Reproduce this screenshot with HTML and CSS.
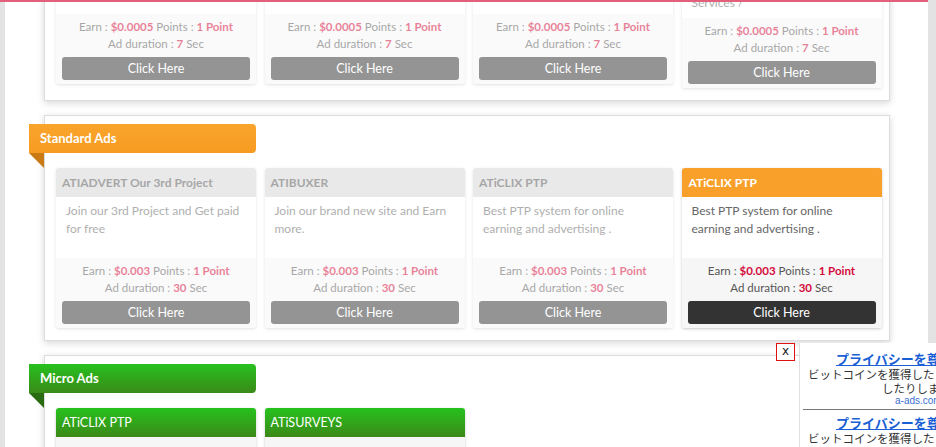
FILE: index.html
```html
<!DOCTYPE html>
<html lang="en">
<head>
<meta charset="utf-8">
<title>Ads</title>
<link rel="stylesheet" href="styles.css">
</head>
<body>
<div class="topline"></div>
<div class="wrap">
  <section class="panel first">
    <div class="ribbon pink">Fast Ads<span class="fold"></span></div>
    <div class="grid">
      <div class="card off">
        <div class="card-head">ATiCLIX PTP</div>
        <div class="card-body">Best PTP system for online<br>earning and advertising .</div>
        <div class="card-foot">
          <div class="line">Earn : <b>$0.0005</b> Points : <b>1 Point</b></div>
          <div class="line">Ad duration : <b>7</b> Sec</div>
          <a class="btn">Click Here</a>
        </div>
      </div>
      <div class="card off">
        <div class="card-head">ATIBUXER</div>
        <div class="card-body">Join our brand new site and Earn<br>more.</div>
        <div class="card-foot">
          <div class="line">Earn : <b>$0.0005</b> Points : <b>1 Point</b></div>
          <div class="line">Ad duration : <b>7</b> Sec</div>
          <a class="btn">Click Here</a>
        </div>
      </div>
      <div class="card off">
        <div class="card-head">ATIADVERT Our 3rd Project</div>
        <div class="card-body">Join our 3rd Project and Get paid<br>for free</div>
        <div class="card-foot">
          <div class="line">Earn : <b>$0.0005</b> Points : <b>1 Point</b></div>
          <div class="line">Ad duration : <b>7</b> Sec</div>
          <a class="btn">Click Here</a>
        </div>
      </div>
      <div class="card off">
        <div class="card-head">ATiSURVEYS</div>
        <div class="card-body">Complete surveys, offers and<br>get paid for our Partner<br>Services /</div>
        <div class="card-foot">
          <div class="line">Earn : <b>$0.0005</b> Points : <b>1 Point</b></div>
          <div class="line">Ad duration : <b>7</b> Sec</div>
          <a class="btn">Click Here</a>
        </div>
      </div>
    </div>
  </section>

  <section class="panel">
    <div class="ribbon orange">Standard Ads<span class="fold"></span></div>
    <div class="grid">
      <div class="card off">
        <div class="card-head">ATIADVERT Our 3rd Project</div>
        <div class="card-body">Join our 3rd Project and Get paid<br>for free</div>
        <div class="card-foot">
          <div class="line">Earn : <b>$0.003</b> Points : <b>1 Point</b></div>
          <div class="line">Ad duration : <b>30</b> Sec</div>
          <a class="btn">Click Here</a>
        </div>
      </div>
      <div class="card off">
        <div class="card-head">ATIBUXER</div>
        <div class="card-body">Join our brand new site and Earn<br>more.</div>
        <div class="card-foot">
          <div class="line">Earn : <b>$0.003</b> Points : <b>1 Point</b></div>
          <div class="line">Ad duration : <b>30</b> Sec</div>
          <a class="btn">Click Here</a>
        </div>
      </div>
      <div class="card off">
        <div class="card-head">ATiCLIX PTP</div>
        <div class="card-body">Best PTP system for online<br>earning and advertising .</div>
        <div class="card-foot">
          <div class="line">Earn : <b>$0.003</b> Points : <b>1 Point</b></div>
          <div class="line">Ad duration : <b>30</b> Sec</div>
          <a class="btn">Click Here</a>
        </div>
      </div>
      <div class="card on">
        <div class="card-head">ATiCLIX PTP</div>
        <div class="card-body">Best PTP system for online<br>earning and advertising .</div>
        <div class="card-foot">
          <div class="line">Earn : <b>$0.003</b> Points : <b>1 Point</b></div>
          <div class="line">Ad duration : <b>30</b> Sec</div>
          <a class="btn">Click Here</a>
        </div>
      </div>
    </div>
  </section>

  <section class="panel">
    <div class="ribbon green">Micro Ads<span class="fold"></span></div>
    <div class="grid">
      <div class="card micro">
        <div class="card-head">ATiCLIX PTP</div>
        <div class="card-foot">
          <div class="line">Earn : <b>$0.0001</b> Points : <b>1 Point</b></div>
          <div class="line">Ad duration : <b>5</b> Sec</div>
          <a class="btn">Click Here</a>
        </div>
      </div>
      <div class="card micro">
        <div class="card-head">ATiSURVEYS</div>
        <div class="card-foot">
          <div class="line">Earn : <b>$0.0001</b> Points : <b>1 Point</b></div>
          <div class="line">Ad duration : <b>5</b> Sec</div>
          <a class="btn">Click Here</a>
        </div>
      </div>
    </div>
  </section>
</div>

<div class="ad-close">x</div>
<div class="ad">
  <div class="ad-item">
    <a class="ad-link">プライバシーを尊重するビットコイン広告</a>
    <div class="ad-text">ビットコインを獲得したり宣伝</div>
    <div class="ad-text t2">したりします</div>
    <div class="ad-src">a-ads.com</div>
  </div>
  <div class="ad-item sep">
    <a class="ad-link">プライバシーを尊重するビットコイン広告</a>
    <div class="ad-text">ビットコインを獲得したり宣伝</div>
  </div>
</div>
</body>
</html>
```
FILE: styles.css
```css
* { box-sizing: border-box; }
html, body { margin: 0; padding: 0; }
body {
  background: #e3e3e3;
  font-family: "Lato", "Noto Sans", sans-serif;
  color: #555;
  overflow: hidden;
}
.topline {
  position: fixed;
  top: 0;
  left: 0;
  width: 928px;
  height: 2px;
  background: #e3607d;
  z-index: 5;
}
.wrap {
  display: flow-root;
  margin-left: 5px;
  width: 923px;
  min-height: 100vh;
  background: #fff;
  padding: 0 38px 40px 39px;
}
.panel {
  border: 1px solid #dcdcdc;
  background: #fff;
  box-shadow: 0 2px 7px rgba(0,0,0,0.16);
  padding: 8px 8px 12px 11px;
  margin-bottom: 14px;
}
.panel.first { margin-top: -129px; }
.ribbon {
  position: relative;
  margin-left: -27px;
  width: 227px;
  height: 29px;
  line-height: 29px;
  padding-left: 11px;
  color: #fff;
  font-weight: 700;
  font-size: 13px;
  border-radius: 0 4px 4px 0;
  margin-bottom: 15px;
}
.ribbon .fold {
  position: absolute;
  left: 0;
  top: 29px;
  width: 0;
  height: 0;
  border-top: 15px solid #c97a12;
  border-left: 15px solid transparent;
}
.ribbon.orange { background: linear-gradient(#faa42c, #f79b22); }
.ribbon.pink { background: #e3607d; }
.ribbon.green { background: linear-gradient(#27c11f, #3a8a18); }
.ribbon.green .fold { border-top-color: #2a6b12; }
.ribbon.pink .fold { border-top-color: #a8405a; }
.grid {
  display: grid;
  grid-template-columns: repeat(4, 200px);
  column-gap: 8.5px;
  align-items: start;
}
.card {
  background: #fff;
  border-radius: 3px;
  box-shadow: 0 1px 3px rgba(0,0,0,0.22);
  overflow: hidden;
}
.card.off { opacity: 0.52; }
.card-head {
  height: 29px;
  line-height: 29px;
  padding: 0 6px;
  font-size: 12px;
  font-weight: 700;
  white-space: nowrap;
  overflow: hidden;
}
.card.off .card-head { background: #d6d6d6; color: #555; }
.card.on .card-head { background: #f9a02a; color: #fff; padding-left: 7px; }
.card.micro .card-head {
  background: linear-gradient(#26c21e, #3c8918);
  color: #fff;
  font-weight: 400;
  font-size: 12.5px;
}
.card-body {
  min-height: 61px;
  padding: 5px 9px 6px 10px;
  font-size: 12px;
  line-height: 18px;
  color: #666;
}
.card-foot {
  background: #f6f6f6;
  padding: 4px 6px 4px;
  text-align: center;
  font-size: 11.5px;
  color: #555;
}
.card.micro .card-foot { padding-top: 7px; }
.card-foot .line { line-height: 17px; }
.card-foot b { color: #d40c3c; font-weight: 700; }
.btn {
  display: block;
  margin-top: 5px;
  height: 23px;
  line-height: 23px;
  background: #333;
  color: #fff;
  border-radius: 3px;
  font-size: 12.5px;
}
.ad-close {
  position: fixed;
  left: 776px;
  top: 343px;
  width: 19px;
  height: 18px;
  border: 1px solid #e01010;
  background: #fff;
  color: #222;
  font-family: "DejaVu Sans", sans-serif;
  font-size: 12px;
  line-height: 15px;
  text-align: center;
}
.ad {
  position: fixed;
  left: 799px;
  top: 343px;
  right: 0;
  bottom: 0;
  background: #fff;
  border-left: 1px solid #e0e0e0;
  overflow: hidden;
  font-family: "Liberation Sans", "Noto Sans CJK JP", sans-serif;
  white-space: nowrap;
}
.ad-item { padding-top: 7px; height: 66px; }
.ad-item.sep {
  margin-left: 3px;
  border-top: 1px solid #777;
  padding-top: 4px;
}
.ad-link {
  display: block;
  color: #1a5fd6;
  text-decoration: underline;
  font-weight: 700;
  font-size: 13px;
  line-height: 17px;
  padding-left: 36px;
  font-family: "Noto Sans CJK JP", sans-serif;
}
.ad-item.sep .ad-link { padding-left: 33px; }
.ad-text {
  font-family: "Noto Sans CJK JP", sans-serif;
  font-size: 11.5px;
  line-height: 14px;
  color: #333;
  padding-left: 8px;
}
.ad-item.sep .ad-text { padding-left: 5px; }
.ad-text.t2 { padding-left: 82px; }
.ad-src {
  font-size: 10px;
  line-height: 12px;
  color: #3b6fd0;
  padding-left: 95px;
}
```
